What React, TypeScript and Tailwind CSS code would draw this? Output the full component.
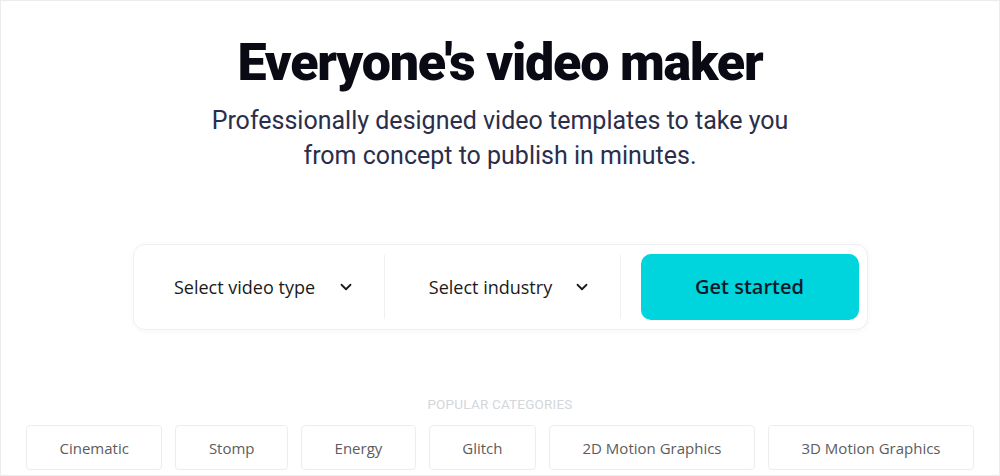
import { ChevronDown } from "lucide-react";

const categories = [
  "Cinematic",
  "Stomp",
  "Energy",
  "Glitch",
  "2D Motion Graphics",
  "3D Motion Graphics",
];

export default function App() {
  return (
    <div className="w-[1000px] h-[476px] bg-white border border-[#ececec] overflow-hidden">
      <div className="flex flex-col items-center pt-[30px]">
        <h1 className="font-['Roboto',sans-serif] font-black text-[52px] leading-[64px] tracking-[-1.2px] text-[#0a0a14]">
          Everyone's video maker
        </h1>
        <p className="mt-[8px] text-center font-['Roboto',sans-serif] text-[25px] leading-[35px] text-[#2b2e4a]">
          Professionally designed video templates to take you
          <br />
          from concept to publish in minutes.
        </p>

        <div className="mt-[71px] w-[735px] h-[86px] flex items-center rounded-[12px] border border-[#f0f0f0] shadow-[0_1px_6px_rgba(0,0,0,0.04)] bg-white pr-[8px] font-['Open_Sans',sans-serif]">
          <div className="w-[251px] h-[64px] flex items-center justify-center gap-[22px] pl-[12px] border-r border-[#f0f0f0]">
            <span className="text-[18px] text-[#1a1a1a]">Select video type</span>
            <ChevronDown size={18} strokeWidth={2.4} className="text-[#1a1a1a]" />
          </div>
          <div className="w-[236px] h-[64px] flex items-center justify-center gap-[21px] pl-[16px] border-r border-[#f0f0f0]">
            <span className="text-[18px] text-[#1a1a1a]">Select industry</span>
            <ChevronDown size={18} strokeWidth={2.4} className="text-[#1a1a1a]" />
          </div>
          <button className="ml-[20px] w-[218px] h-[66px] rounded-[10px] bg-[#00d4dc] text-[20px] font-semibold text-[#0d1b2a]">
            Get started
          </button>
        </div>

        <div className="mt-[64px] font-['Roboto',sans-serif] text-[13.5px] tracking-[0.2px] text-[#d3d6db]">
          POPULAR CATEGORIES
        </div>
        <div className="mt-[11px] flex gap-[13px] font-['Open_Sans',sans-serif]">
          {categories.map((c) => (
            <div
              key={c}
              className="h-[45px] px-[32.5px] flex items-center rounded-[4px] border border-[#ededed] text-[15px] text-[#5c5c5c]"
            >
              {c}
            </div>
          ))}
        </div>
      </div>
    </div>
  );
}
